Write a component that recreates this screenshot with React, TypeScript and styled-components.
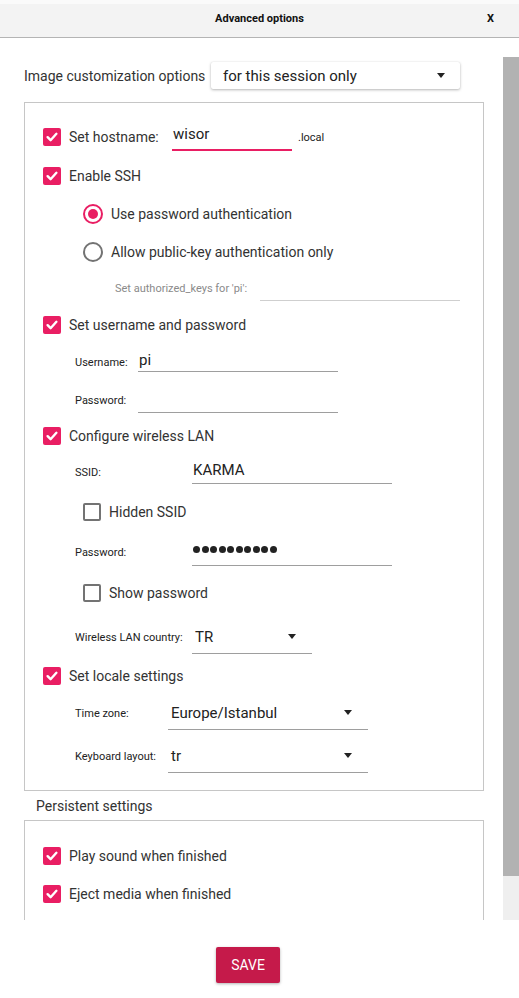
import React from 'react'
import styled, { createGlobalStyle } from 'styled-components'

const pink = '#e91e63'

const GlobalStyle = createGlobalStyle`
  body {
    margin: 0;
    font-family: Roboto, "Liberation Sans", sans-serif;
    background: #fff;
  }
`

const Check: React.FC<{ checked?: boolean }> = ({ checked }) => (
  <CheckBox $checked={checked}>
    {checked && (
      <svg width="14" height="14" viewBox="0 0 14 14">
        <path d="M2.6 7.2 L5.6 10.2 L11.4 3.8" fill="none" stroke="#fff" strokeWidth="2.4" strokeLinecap="round" strokeLinejoin="round" />
      </svg>
    )}
  </CheckBox>
)

const Caret = styled.span`
  width: 0;
  height: 0;
  border-left: 4.5px solid transparent;
  border-right: 4.5px solid transparent;
  border-top: 5px solid #222;
  margin-left: auto;
`

const App: React.FC = () => (
  <Window>
    <GlobalStyle />
    <Header>
      <span />
      <Title>Advanced options</Title>
      <Close>X</Close>
    </Header>
    <Main>
      <Scroller>
        <TopRow>
          <TopLabel>Image customization options</TopLabel>
          <TopCombo>
            for this session only
            <Caret />
          </TopCombo>
        </TopRow>

        <Group $pb={12}>
          <Row $h={38} $indent={18}>
            <Check checked />
            <CheckText $w={103}>Set hostname:</CheckText>
            <LineInput $w={120} $h={28} $focus>wisor</LineInput>
            <Suffix>.local</Suffix>
          </Row>
          <Row $h={39} $indent={18}>
            <Check checked />
            <CheckText>Enable SSH</CheckText>
          </Row>
          <Row $h={38} $indent={58}>
            <Radio $checked />
            <CheckText>Use password authentication</CheckText>
          </Row>
          <Row $h={38} $indent={58}>
            <Radio />
            <CheckText>Allow public-key authentication only</CheckText>
          </Row>
          <Row $h={35} $indent={90}>
            <FieldLabel $w={145} $muted>Set authorized_keys for 'pi':</FieldLabel>
            <LineInput $w={200} $h={24} $muted />
          </Row>
          <Row $h={37} $indent={18}>
            <Check checked />
            <CheckText>Set username and password</CheckText>
          </Row>
          <Row $h={38} $indent={50}>
            <FieldLabel $w={63}>Username:</FieldLabel>
            <LineInput $w={200} $h={20}>pi</LineInput>
          </Row>
          <Row $h={39} $indent={50}>
            <FieldLabel $w={63}>Password:</FieldLabel>
            <LineInput $w={200} $h={24} />
          </Row>
          <Row $h={32} $indent={18}>
            <Check checked />
            <CheckText>Configure wireless LAN</CheckText>
          </Row>
          <Row $h={40} $indent={50}>
            <FieldLabel $w={117}>SSID:</FieldLabel>
            <LineInput $w={200} $h={24}>KARMA</LineInput>
          </Row>
          <Row $h={40} $indent={58}>
            <Check />
            <CheckText>Hidden SSID</CheckText>
          </Row>
          <Row $h={40} $indent={50}>
            <FieldLabel $w={117}>Password:</FieldLabel>
            <LineInput $w={200} $h={28}>
              <Dots>
                {[...Array(10)].map((_, i) => (
                  // eslint-disable-next-line react/no-array-index-key
                  <Dot key={i} />
                ))}
              </Dots>
            </LineInput>
          </Row>
          <Row $h={42} $indent={58}>
            <Check />
            <CheckText>Show password</CheckText>
          </Row>
          <Row $h={46} $indent={50}>
            <FieldLabel $w={117}>Wireless LAN country:</FieldLabel>
            <Combo $w={120}>
              TR
              <Caret />
            </Combo>
          </Row>
          <Row $h={32} $indent={18}>
            <Check checked />
            <CheckText>Set locale settings</CheckText>
          </Row>
          <Row $h={42} $indent={50}>
            <FieldLabel $w={93}>Time zone:</FieldLabel>
            <Combo $w={200}>
              Europe/Istanbul
              <Caret />
            </Combo>
          </Row>
          <Row $h={44} $indent={50}>
            <FieldLabel $w={93}>Keyboard layout:</FieldLabel>
            <Combo $w={200}>
              tr
              <Caret />
            </Combo>
          </Row>
        </Group>

        <SectionTitle>Persistent settings</SectionTitle>

        <Group $pb={24}>
          <Row $h={39} $indent={18}>
            <Check checked />
            <CheckText>Play sound when finished</CheckText>
          </Row>
          <Row $h={38} $indent={18}>
            <Check checked />
            <CheckText>Eject media when finished</CheckText>
          </Row>
        </Group>
      </Scroller>
      <ScrollBar>
        <Thumb />
        <Track />
      </ScrollBar>
    </Main>
    <Footer>
      <SaveButton>SAVE</SaveButton>
    </Footer>
  </Window>
)

const Window = styled.div`
  width: 519px;
  height: 998px;
  display: flex;
  flex-direction: column;
  background: #fff;
  overflow: hidden;
`

const Header = styled.div`
  height: 37px;
  flex-shrink: 0;
  display: grid;
  grid-template-columns: 1fr auto 1fr;
  align-items: center;
  background: linear-gradient(#fafafa 0, #fafafa 4px, #f3f3f3 4px);
  border-bottom: 1px solid #b4b4b4;
`

const Title = styled.span`
  font-size: 11px;
  font-weight: 700;
  color: #111;
`

const Close = styled.span`
  justify-self: end;
  padding-right: 25px;
  font-size: 11px;
  font-weight: 700;
  color: #111;
`

const Main = styled.div`
  height: 882px;
  flex-shrink: 0;
  display: flex;
`

const Scroller = styled.div`
  width: 503px;
  box-sizing: border-box;
  padding: 24px 19px 0 24px;
  overflow: hidden;
`

const ScrollBar = styled.div`
  width: 16px;
  padding-top: 19px;
  display: flex;
  flex-direction: column;
`

const Thumb = styled.div`
  height: 819px;
  background: #b2b2b2;
`

const Track = styled.div`
  flex: 1;
  background: #efefef;
`

const TopRow = styled.div`
  height: 27px;
  display: flex;
  align-items: center;
`

const TopLabel = styled.span`
  width: 187px;
  font-size: 14px;
  color: #333;
  white-space: nowrap;
`

const TopCombo = styled.div`
  width: 249px;
  height: 27px;
  box-sizing: border-box;
  display: flex;
  align-items: center;
  padding: 0 15px 0 12px;
  font-size: 15px;
  color: #222;
  background: #fff;
  border-radius: 2px;
  box-shadow: 0 1px 3px rgba(0, 0, 0, 0.28), 0 0 1px rgba(0, 0, 0, 0.12);
`

const Group = styled.div<{ $pb: number }>`
  margin-top: 13px;
  border: 1px solid #c6c6c6;
  padding: 15px 0 ${(p) => p.$pb}px;
  display: flex;
  flex-direction: column;
  &:last-child {
    margin-top: 0;
  }
`

const SectionTitle = styled.div`
  height: 29px;
  display: flex;
  align-items: center;
  padding-left: 12px;
  font-size: 14px;
  color: #333;
`

const Row = styled.div<{ $h: number; $indent: number }>`
  height: ${(p) => p.$h}px;
  padding-left: ${(p) => p.$indent}px;
  display: flex;
  align-items: center;
`

const CheckBox = styled.span<{ $checked?: boolean }>`
  width: 18px;
  height: 18px;
  box-sizing: border-box;
  flex-shrink: 0;
  border-radius: 2px;
  display: flex;
  align-items: center;
  justify-content: center;
  background: ${(p) => (p.$checked ? pink : '#fff')};
  border: ${(p) => (p.$checked ? 'none' : '2px solid #737373')};
`

const Radio = styled.span<{ $checked?: boolean }>`
  width: 20px;
  height: 20px;
  box-sizing: border-box;
  flex-shrink: 0;
  border-radius: 50%;
  border: 2px solid ${(p) => (p.$checked ? pink : '#737373')};
  display: flex;
  align-items: center;
  justify-content: center;
  &::after {
    content: '';
    width: 10px;
    height: 10px;
    border-radius: 50%;
    background: ${(p) => (p.$checked ? pink : 'transparent')};
  }
`

const CheckText = styled.span<{ $w?: number }>`
  margin-left: 8px;
  font-size: 14px;
  color: #333;
  white-space: nowrap;
  ${(p) => (p.$w ? `width: ${p.$w}px;` : '')}
`

const FieldLabel = styled.span<{ $w: number; $muted?: boolean }>`
  width: ${(p) => p.$w}px;
  flex-shrink: 0;
  font-size: 11px;
  color: ${(p) => (p.$muted ? '#8a8a8a' : '#222')};
  white-space: nowrap;
`

const LineInput = styled.div<{ $w: number; $h: number; $focus?: boolean; $muted?: boolean }>`
  width: ${(p) => p.$w}px;
  height: ${(p) => p.$h}px;
  box-sizing: border-box;
  display: flex;
  align-items: center;
  padding: 0 0 4px 1px;
  font-size: 15px;
  color: #222;
  border-bottom: ${(p) =>
    p.$focus ? `2px solid ${pink}` : `1px solid ${p.$muted ? '#cfcfcf' : '#9e9e9e'}`};
`

const Combo = styled.div<{ $w: number }>`
  width: ${(p) => p.$w}px;
  height: 34px;
  box-sizing: border-box;
  display: flex;
  align-items: center;
  padding: 0 16px 0 3px;
  font-size: 15px;
  color: #222;
  border-bottom: 1px solid #9e9e9e;
`

const Suffix = styled.span`
  margin-left: 6px;
  font-size: 11px;
  color: #222;
`

const Dots = styled.span`
  display: flex;
  gap: 1.5px;
`

const Dot = styled.span`
  width: 7px;
  height: 7px;
  border-radius: 50%;
  background: #222;
`

const Footer = styled.div`
  flex: 1;
  padding: 27px 0 0 216px;
`

const SaveButton = styled.button`
  width: 64px;
  height: 36px;
  border: none;
  border-radius: 2px;
  background: #c51a4a;
  color: #fff;
  font-family: Roboto, "Liberation Sans", sans-serif;
  font-size: 14px;
  box-shadow: 0 1px 3px rgba(0, 0, 0, 0.3);
`

export default App
